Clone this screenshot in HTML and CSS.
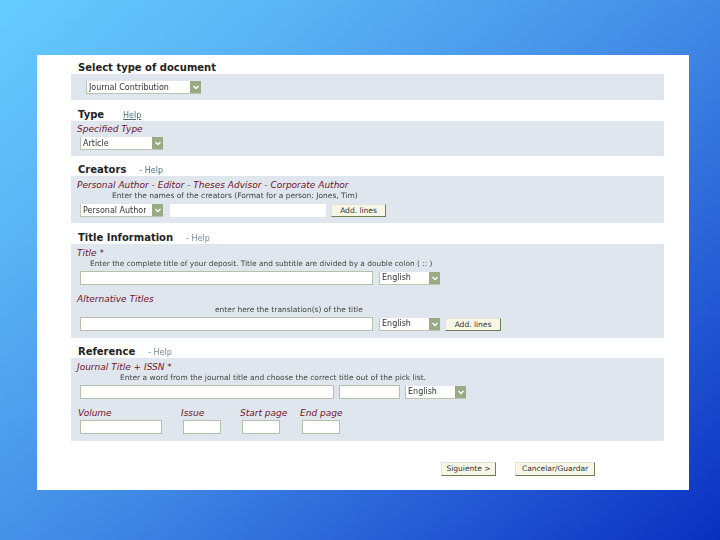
FILE: index.html
```html
<!DOCTYPE html>
<html lang="en">
<head>
<meta charset="utf-8">
<title>Select type of document</title>
<link rel="stylesheet" href="styles.css">
</head>
<body>
<main class="card">
  <h2 class="heading heading-first">Select type of document</h2>
  <section class="panel panel-doc">
    <div class="select select-doc"><span class="select-text">Journal Contribution</span><span class="arrow"><svg viewBox="0 0 8 8" width="8" height="8"><path d="M1.5 3 4 5.5 6.5 3" fill="none" stroke="#fff" stroke-width="1.4"/></svg></span></div>
  </section>

  <h2 class="heading heading-tall">Type <a class="help help-type">Help</a></h2>
  <section class="panel panel-type">
    <div class="label label-type">Specified Type</div>
    <div class="row">
      <div class="select select-wide"><span class="select-text">Article</span><span class="arrow"><svg viewBox="0 0 8 8" width="8" height="8"><path d="M1.5 3 4 5.5 6.5 3" fill="none" stroke="#fff" stroke-width="1.4"/></svg></span></div>
    </div>
  </section>

  <h2 class="heading">Creators <a class="help help-creators">- Help</a></h2>
  <section class="panel panel-creators">
    <div class="label">Personal Author - Editor - Theses Advisor - Corporate Author</div>
    <div class="hint hint-creators">Enter the names of the creators (Format for a person: Jones, Tim)</div>
    <div class="row">
      <div class="select select-wide"><span class="select-text">Personal Author</span><span class="arrow"><svg viewBox="0 0 8 8" width="8" height="8"><path d="M1.5 3 4 5.5 6.5 3" fill="none" stroke="#fff" stroke-width="1.4"/></svg></span></div>
      <input class="field field-creator" type="text">
      <button class="btn btn-add" type="button">Add. lines</button>
    </div>
  </section>

  <h2 class="heading heading-tall">Title Information <a class="help help-title">- Help</a></h2>
  <section class="panel panel-title">
    <div class="label">Title *</div>
    <div class="hint hint-title">Enter the complete title of your deposit. Title and subtitle are divided by a double colon ( :: )</div>
    <div class="row">
      <input class="field field-title" type="text">
      <div class="select select-lang"><span class="select-text">English</span><span class="arrow"><svg viewBox="0 0 8 8" width="8" height="8"><path d="M1.5 3 4 5.5 6.5 3" fill="none" stroke="#fff" stroke-width="1.4"/></svg></span></div>
    </div>
    <div class="label label-alt">Alternative Titles</div>
    <div class="hint hint-alt">enter here the translation(s) of the title</div>
    <div class="row">
      <input class="field field-title" type="text">
      <div class="select select-lang"><span class="select-text">English</span><span class="arrow"><svg viewBox="0 0 8 8" width="8" height="8"><path d="M1.5 3 4 5.5 6.5 3" fill="none" stroke="#fff" stroke-width="1.4"/></svg></span></div>
      <button class="btn btn-add btn-add-alt" type="button">Add. lines</button>
    </div>
  </section>

  <h2 class="heading">Reference <a class="help help-ref">- Help</a></h2>
  <section class="panel panel-ref">
    <div class="label">Journal Title + ISSN *</div>
    <div class="hint hint-ref">Enter a word from the journal title and choose the correct title out of the pick list.</div>
    <div class="row">
      <input class="field field-journal" type="text">
      <input class="field field-issn" type="text">
      <div class="select select-lang"><span class="select-text">English</span><span class="arrow"><svg viewBox="0 0 8 8" width="8" height="8"><path d="M1.5 3 4 5.5 6.5 3" fill="none" stroke="#fff" stroke-width="1.4"/></svg></span></div>
    </div>
    <div class="biblio">
      <div class="cell cell-volume"><div class="label label-small">Volume</div><input class="field field-volume" type="text"></div>
      <div class="cell cell-issue"><div class="label label-small">Issue</div><input class="field field-page" type="text"></div>
      <div class="cell cell-start"><div class="label label-small">Start page</div><input class="field field-page" type="text"></div>
      <div class="cell"><div class="label label-small">End page</div><input class="field field-page" type="text"></div>
    </div>
  </section>

  <div class="actions">
    <button class="btn btn-next" type="button">Siguiente &gt;</button>
    <button class="btn btn-cancel" type="button">Cancelar/Guardar</button>
  </div>
</main>
</body>
</html>
```
FILE: styles.css
```css
* { box-sizing: border-box; }
html, body { margin: 0; height: 540px; overflow: hidden; }
body {
  width: 720px;
  padding: 55px 31px 50px 37px;
  background: linear-gradient(140deg, #66ccff 0%, #5ab4f4 22%, #3f86e4 55%, #2459d4 78%, #0a2fc0 100%);
  font-family: "DejaVu Sans", Verdana, sans-serif;
}
.card {
  width: 652px;
  height: 435px;
  background: #fff;
  padding: 0 25px 0 34px;
}
.heading {
  margin: 0;
  height: 20px;
  padding: 8px 0 0 7px;
  font-size: 10px;
  line-height: 12px;
  font-weight: bold;
  color: #222;
  display: flex;
  align-items: baseline;
  white-space: nowrap;
}
.heading-first { height: 19px; padding-top: 7px; }
.heading-tall { height: 21px; padding-top: 9px; }
.help { font-size: 8px; font-weight: normal; color: #4a7080; filter: blur(.3px); }
.help-type { margin-left: 19px; text-decoration: underline; }
.help-creators { margin-left: 13px; }
.help-title { margin-left: 13px; color: #7a8a94; }
.help-ref { margin-left: 13px; color: #7a8a94; }

.panel { background: #dfe6ee; padding-left: 9px; }
.panel-doc { height: 26px; padding: 7px 0 0 15px; }
.panel-type { height: 35px; }
.panel-creators { height: 47px; }
.panel-title { height: 94px; }
.panel-ref { height: 83px; }

.label {
  margin-left: -3px;
  height: 16px;
  padding-top: 4px;
  font-size: 9px;
  line-height: 11px;
  font-style: italic;
  color: #741428;
  white-space: nowrap;
}
.label-type { padding-top: 3px; }
.panel-title > .label-alt { height: 13px; margin-top: 8px; padding-top: 1px; }
.label-small { height: 14px; padding-top: 2px; margin-left: -2px; }
.hint {
  font-size: 7.5px;
  line-height: 8px;
  color: #444;
  white-space: nowrap;
  filter: blur(.3px);
}
.hint-creators { padding-left: 32px; height: 12px; }
.hint-title { padding-left: 10px; height: 11px; font-size: 7.4px; }
.hint-alt { padding-left: 135px; height: 11px; }
.hint-ref { padding-left: 40px; height: 11px; }

.row { display: flex; align-items: center; gap: 6px; }

.select {
  display: flex;
  justify-content: space-between;
  align-items: center;
  height: 13px;
  background: #fff;
  border-bottom: 1px solid #b9c7ae;
  border-left: 1px solid #b9c7ae;
  font-size: 8px;
  color: #333;
  padding-left: 2px;
}
.select-doc { width: 115px; }
.select-wide { width: 83px; }
.select-lang { width: 61px; }
.select-text { white-space: nowrap; overflow: hidden; filter: blur(.3px); }
.arrow {
  flex: none;
  width: 11px;
  height: 12px;
  background: #9aaa85;
  display: flex;
  align-items: center;
  justify-content: center;
}

.field {
  display: block;
  height: 14px;
  margin: 0;
  padding: 0;
  background: #fff;
  border: 1px solid #b3c1aa;
  border-radius: 0;
}
.field-creator { width: 156px; margin-left: 1px; border-color: #fff; height: 13px; }
.field-title { width: 293px; }
.field-journal { width: 254px; margin-right: -1px; }
.field-issn { width: 61px; margin-right: -1px; }
.field-volume { width: 82px; }
.field-page { width: 38px; }

.btn {
  display: block;
  margin: 0;
  padding: 0;
  height: 14px;
  font-family: "DejaVu Sans", Verdana, sans-serif;
  font-size: 7.5px;
  line-height: 12px;
  color: #333;
  background: #f8f6e6;
  border: 1px solid #e4e4d4;
  border-right-color: #6f7f55;
  border-bottom-color: #6f7f55;
  border-radius: 0;
  white-space: nowrap;
}
.btn-add { width: 55px; margin-left: -1px; height: 13px; }
.btn-add-alt { width: 56px; }

.biblio { display: flex; margin-top: 7px; }
.cell { width: 38px; }
.cell-volume { width: 103px; }
.cell-issue { width: 59px; }
.cell-start { width: 60px; }
.panel-ref .row { height: 14px; }

.actions {
  display: flex;
  gap: 19px;
  margin-top: 21px;
  padding-left: 370px;
}
.btn-next { width: 55px; }
.btn-cancel { width: 80px; }
```
